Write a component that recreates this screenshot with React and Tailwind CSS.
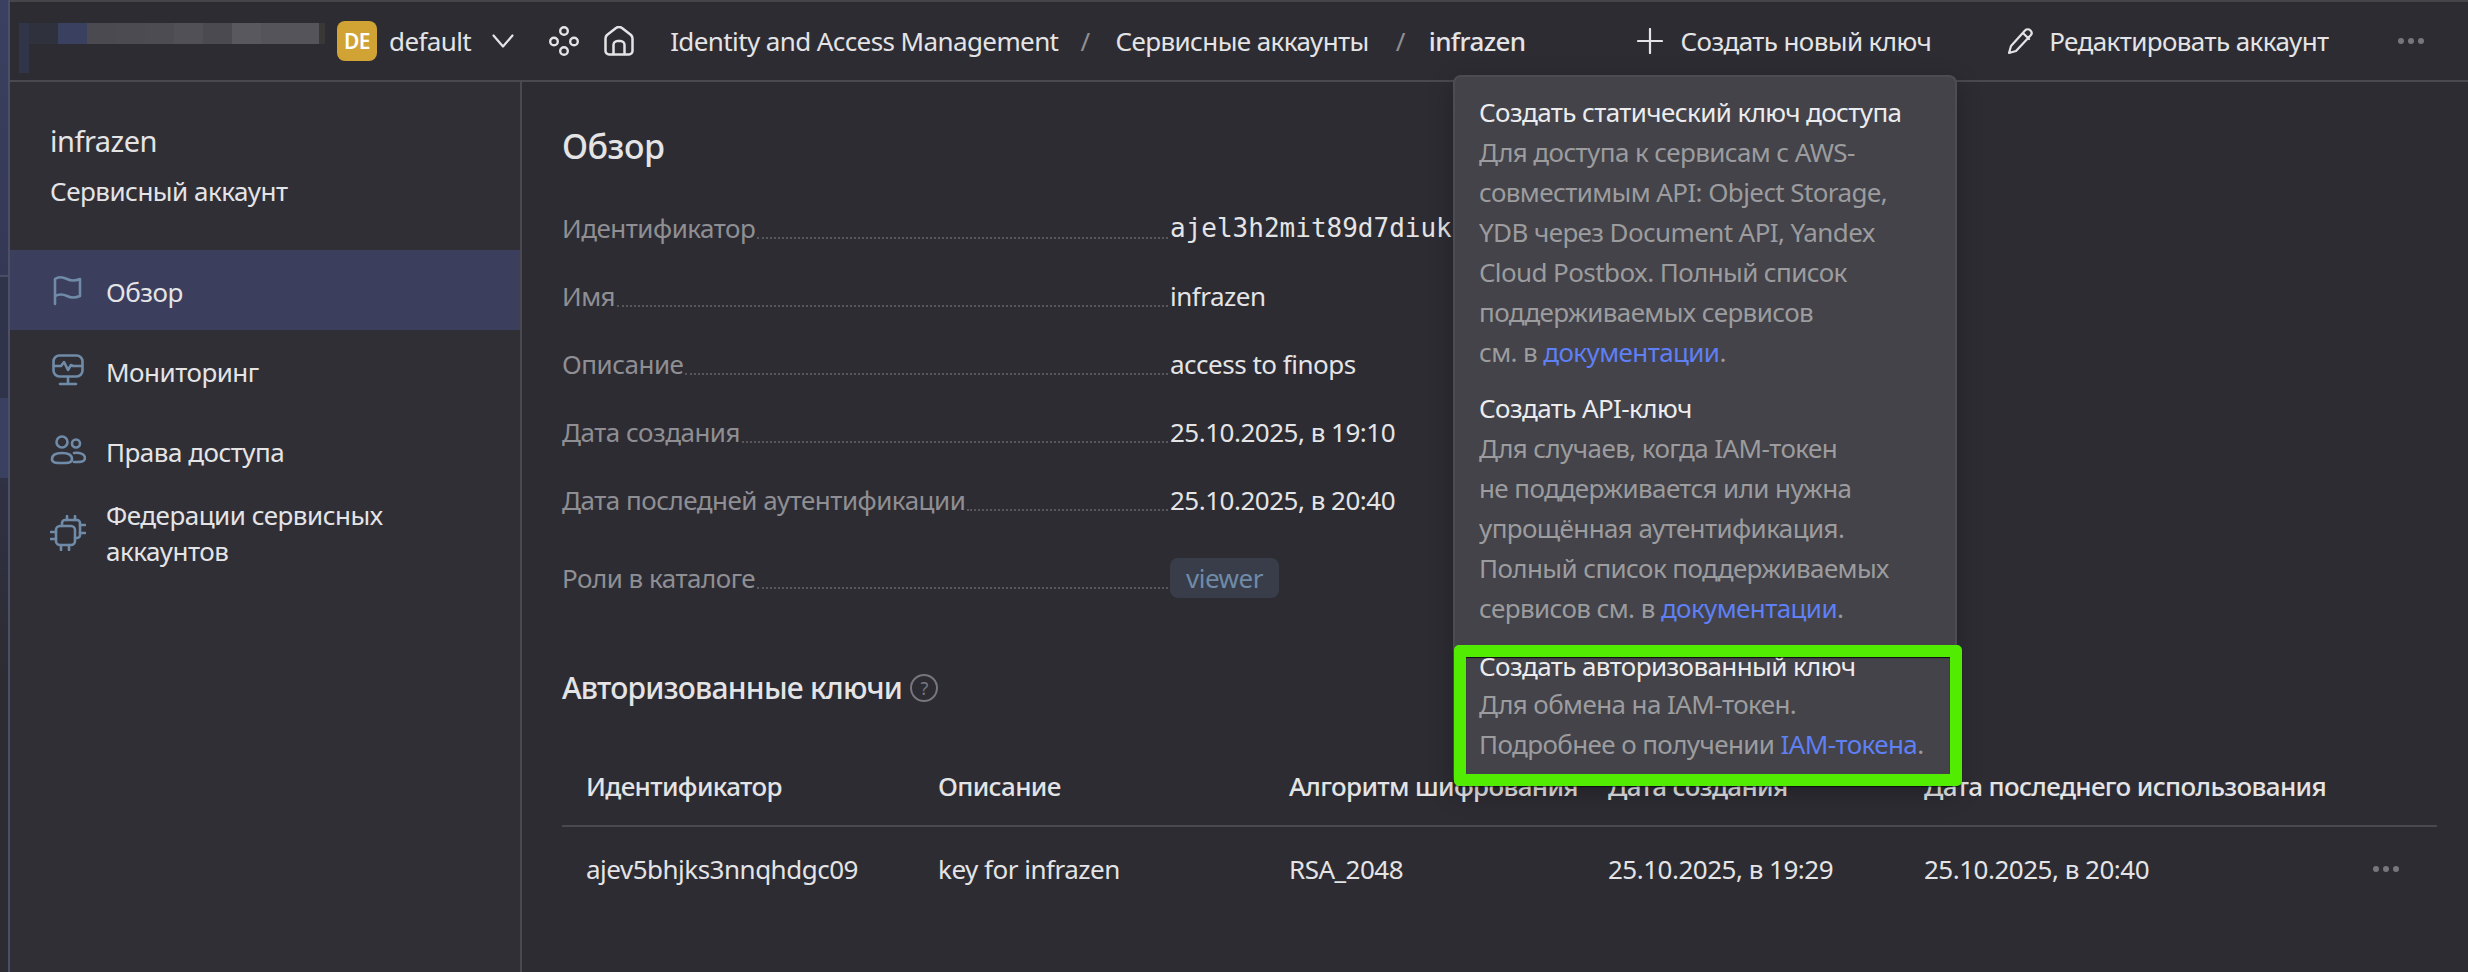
import React from "react";

const F = { fontFamily: '"Noto Sans", "Liberation Sans", sans-serif' };

function Flag() {
  return (
    <svg width="32" height="32" viewBox="0 0 32 32" fill="none" stroke="#6f8ba8" strokeWidth="2.6" strokeLinecap="round" strokeLinejoin="round">
      <path d="M3 30V5c4-3 8-2 12 0s8 2 13 0v17c-5 2-9 2-13 0s-8-2-12 0" />
    </svg>
  );
}
function Monitor() {
  return (
    <svg width="32" height="32" viewBox="0 0 32 32" fill="none" stroke="#6f8ba8" strokeWidth="2.6" strokeLinecap="round" strokeLinejoin="round">
      <rect x="1.5" y="1.5" width="29" height="21" rx="6" />
      <path d="M2 12h7l3-4 4 8 3-5 2 1h9M16 23v6M8 30h16" />
    </svg>
  );
}
function People() {
  return (
    <svg width="36" height="30" viewBox="0 0 36 30" fill="none" stroke="#6f8ba8" strokeWidth="2.6" strokeLinecap="round" strokeLinejoin="round">
      <circle cx="12" cy="7" r="5.5" />
      <circle cx="26" cy="8.5" r="4" />
      <path d="M2 24c0-4 4-6 10-6s10 2 10 6-4 4-10 4-10 0-10-4zM24 18c5-1 11 1 11 5s-4 4-11 4" />
    </svg>
  );
}
function Chips() {
  return (
    <svg width="36" height="36" viewBox="0 0 36 36" fill="none" stroke="#6f8ba8" strokeWidth="2.6" strokeLinecap="round" strokeLinejoin="round">
      <rect x="6" y="11" width="19" height="19" rx="4" />
      <path d="M12 11V8a3 3 0 0 1 3-3h12a3 3 0 0 1 3 3v12a3 3 0 0 1-3 3h-2" />
      <path d="M11 30v5M19 30v5M1 17h5M1 24h5M17 1v4M25 1v4M30 10h5M30 18h5" />
    </svg>
  );
}
function Dots({ color = "#77767c" }) {
  return (
    <svg width="28" height="8" viewBox="0 0 28 8" fill={color}>
      <circle cx="4" cy="4" r="3" />
      <circle cx="14" cy="4" r="3" />
      <circle cx="24" cy="4" r="3" />
    </svg>
  );
}

function Header() {
  return (
    <header className="h-[78px] flex items-center text-[26px] text-[#e4e4e6] shrink-0 pl-[9px] whitespace-nowrap tracking-[-0.6px]">
      <div className="w-[307px] h-[50px] self-start mt-[21px] flex flex-col shrink-0">
        <div className="h-[21px] flex">
          <div className="w-[10px] bg-[#30354a]" />
          <div className="w-[29px] bg-[#2f313d]" />
          <div className="w-[29px] bg-[#3a4060]" />
          <div className="w-[29px] bg-[#4a4a50]" />
          <div className="w-[29px] bg-[#4b4b51]" />
          <div className="w-[29px] bg-[#4c4c52]" />
          <div className="w-[29px] bg-[#505056]" />
          <div className="w-[29px] bg-[#4a4a50]" />
          <div className="w-[29px] bg-[#58585e]" />
          <div className="w-[58px] bg-[#54545a]" />
          <div className="w-[6px] bg-[#3a3836]" />
        </div>
        <div className="w-[10px] flex-1 bg-[#30354a]" />
      </div>
      <div className="ml-[11px] w-[40px] h-[40px] shrink-0 rounded-[8px] bg-[#d1a335] flex items-center justify-center text-white text-[21px] font-semibold">DE</div>
      <span className="ml-[12px]">default</span>
      <svg className="ml-[21px] shrink-0" width="22" height="14" viewBox="0 0 22 14" fill="none" stroke="#e4e4e6" strokeWidth="2.2" strokeLinecap="round" strokeLinejoin="round">
        <path d="M1.5 1.5 11 12.5l9.5-11" />
      </svg>
      <svg className="ml-[35px] shrink-0" width="30" height="30" viewBox="0 0 30 30" fill="none" stroke="#e4e4e6" strokeWidth="2.4">
        <circle cx="15" cy="5" r="3.8" />
        <circle cx="5" cy="15.5" r="3.8" />
        <circle cx="25" cy="15.5" r="3.8" />
        <circle cx="15" cy="25" r="3.8" />
      </svg>
      <svg className="ml-[25px] shrink-0" width="30" height="30" viewBox="0 0 30 30" fill="none" stroke="#e4e4e6" strokeWidth="2.5" strokeLinecap="round" strokeLinejoin="round">
        <path d="M1.5 25V12.5c0-1.500.5-2.500 1.500-3.500l9-7c2-1.200 4-1.200 6 0l9 7c1 1 1.500 2 1.500 3.500V25a3.500 3.500 0 0 1-3.500 3.500H5A3.500 3.500 0 0 1 1.500 25z" />
        <path d="M9.5 28v-9a4 4 0 0 1 4-4h3a4 4 0 0 1 4 4v9" />
      </svg>
      <span className="ml-[36px]">Identity and Access Management</span>
      <span className="ml-[22px] text-[#8f8f93]">/</span>
      <span className="ml-[26px]">Сервисные аккаунты</span>
      <span className="ml-[27px] text-[#8f8f93]">/</span>
      <span className="ml-[24px] font-medium">infrazen</span>
      <svg className="ml-[111px] shrink-0" width="26" height="26" viewBox="0 0 26 26" fill="none" stroke="#e4e4e6" strokeWidth="2.2" strokeLinecap="round">
        <path d="M13 1v24M1 13h24" />
      </svg>
      <span className="ml-[18px]">Создать новый ключ</span>
      <svg className="ml-[76px] shrink-0" width="28" height="28" viewBox="0 0 28 28" fill="none" stroke="#e4e4e6" strokeWidth="2.2" strokeLinecap="round" strokeLinejoin="round">
        <path d="M18 3.5c1.500-1.500 4-1.500 5.500 0s1.500 3.500 0 5L9 24l-7 2 2-7zM16 6l6 6" />
      </svg>
      <span className="ml-[14px]">Редактировать аккаунт</span>
      <span className="ml-[68px] flex"><Dots /></span>
    </header>
  );
}

function NavItem({ icon, active, children, tall }) {
  return (
    <div className={`flex items-center gap-[20px] pl-[40px] ${tall ? "leading-[36px] mt-[7px]" : "h-[80px]"} ${active ? "bg-[#3b3e5c]" : ""}`}>
      <div className="w-[36px] flex justify-center items-center shrink-0">{icon}</div>
      <div className={tall ? "" : "pt-[3px]"}>{children}</div>
    </div>
  );
}

function Row({ label, value, mono, tag, first }) {
  return (
    <div className={`flex items-end w-[916px] ${tag ? "h-[36px] mt-[42px]" : "h-[36px]"} ${first || tag ? "" : "mt-[32px]"}`}>
      <span className="text-[#8f8f93]">{label}</span>
      <span className="flex-1 mx-[2px] mb-[7px] border-b-2 border-dotted border-[#57575c]" />
      <span className="w-[308px] shrink-0">
        {tag ? (
          <span className="inline-block h-[40px] leading-[40px] px-[16px] rounded-[8px] bg-[#383d49] text-[#6f8ba8] -mb-[2px]">{value}</span>
        ) : (
          <span className={mono ? "whitespace-nowrap tracking-normal" : ""} style={mono ? { fontFamily: '"DejaVu Sans Mono", monospace' } : undefined}>{value}</span>
        )}
      </span>
    </div>
  );
}

function Popup() {
  const T = ({ children }) => <div className="text-[#ececee]">{children}</div>;
  const D = ({ children }) => <div className="text-[#9c9c9f]">{children}</div>;
  const A = ({ children }) => <span className="text-[#5f7ff5]">{children}</span>;
  return (
    <div className="absolute left-[1453px] top-[75px] w-[504px] h-[710px] bg-[#434349] border-2 border-[#4c4c52] rounded-[8px] pl-[24px] pt-[15px] text-[26px] leading-[40px] tracking-[-0.6px] shadow-[0_8px_24px_rgba(0,0,0,0.25)]">
      <T>Создать статический ключ доступа</T>
      <D>Для доступа к сервисам с AWS-<br />совместимым API: Object Storage,<br />YDB через Document API, Yandex<br />Cloud Postbox. Полный список<br />поддерживаемых сервисов<br />см. в <A>документации</A>.</D>
      <div className="mt-[16px]"><T>Создать API-ключ</T></div>
      <D>Для случаев, когда IAM-токен<br />не поддерживается или нужна<br />упрощённая аутентификация.<br />Полный список поддерживаемых<br />сервисов см. в <A>документации</A>.</D>
      <div className="mt-[20px] leading-[36px]"><T>Создать авторизованный ключ</T></div>
      <D>Для обмена на IAM-токен.<br />Подробнее о получении <A>IAM-токена</A>.</D>
    </div>
  );
}

export default function App() {
  return (
    <div className="relative w-[2468px] h-[972px] overflow-hidden bg-[#2d2c33] text-[26px] leading-[36px] tracking-[-0.5px] text-[#e4e4e6] flex" style={F}>
      <div className="w-[10px] shrink-0 flex flex-col border-r-2 border-[#4d4f66]">
        <div className="h-[277px] bg-gradient-to-b from-[#3a4060] to-[#343855] border-b-2 border-[#4a4d68]" />
        <div className="h-[121px] bg-[#30344b]" />
        <div className="h-[80px] bg-[#3a4060]" />
        <div className="flex-1 bg-gradient-to-b from-[#2f3144] to-[#2d2c33] to-[40%]" />
      </div>
      <div className="flex-1 flex flex-col min-w-0">
        <div className="h-[2px] bg-[#46464a] shrink-0" />
        <Header />
        <div className="h-[2px] bg-[#49494f] shrink-0" />
        <div className="flex flex-1 min-h-0">
          <aside className="w-[510px] shrink-0 bg-[#302f36] border-r-2 border-[#49494f] box-content">
            <div className="h-[168px] pl-[40px] pt-[41px]">
              <div className="text-[29px]">infrazen</div>
              <div className="mt-[14px]">Сервисный аккаунт</div>
            </div>
            <NavItem active icon={<Flag />}>Обзор</NavItem>
            <NavItem icon={<Monitor />}>Мониторинг</NavItem>
            <NavItem icon={<People />}>Права доступа</NavItem>
            <NavItem tall icon={<Chips />}>Федерации сервисных<br />аккаунтов</NavItem>
          </aside>
          <main className="flex-1 min-w-0 pl-[40px] pr-[31px] pt-[42px]">
            <h1 className="text-[34px] leading-[44px] font-medium">Обзор</h1>
            <div className="mt-[42px]">
              <Row first label="Идентификатор" value="ajel3h2mit89d7diuk" mono />
              <Row label="Имя" value="infrazen" />
              <Row label="Описание" value="access to finops" />
              <Row label="Дата создания" value="25.10.2025, в 19:10" />
              <Row label="Дата последней аутентификации" value="25.10.2025, в 20:40" />
              <Row tag label="Роли в каталоге" value="viewer" />
            </div>
            <div className="mt-[72px] flex items-center gap-[8px]">
              <h2 className="text-[30px] leading-[40px] font-medium tracking-[-0.75px]">Авторизованные ключи</h2>
              <div className="w-[28px] h-[28px] rounded-full border-2 border-[#77767c] text-[#77767c] text-[18px] leading-[24px] text-center">?</div>
            </div>
            <div className="mt-[60px]">
              <div className="h-[57px] flex items-start pl-[24px] font-medium border-b-2 border-[#49494f] box-content leading-[36px] tracking-[-0.65px]">
                <div className="w-[352px]">Идентификатор</div>
                <div className="w-[351px]">Описание</div>
                <div className="w-[319px] whitespace-nowrap">Алгоритм шифрования</div>
                <div className="w-[316px]">Дата создания</div>
                <div>Дата последнего использования</div>
              </div>
              <div className="flex items-center pl-[24px] h-[84px]">
                <div className="w-[352px]">ajev5bhjks3nnqhdgc09</div>
                <div className="w-[351px]">key for infrazen</div>
                <div className="w-[319px]">RSA_2048</div>
                <div className="w-[316px]">25.10.2025, в 19:29</div>
                <div>25.10.2025, в 20:40</div>
                <div className="ml-auto mr-[37px] flex"><Dots /></div>
              </div>
            </div>
          </main>
        </div>
      </div>
      <Popup />
      <div className="absolute left-[1454px] top-[645px] w-[508px] h-[141px] border-[12px] border-[#52ec03] rounded-[5px] shadow-[0_1px_1px_rgba(0,0,0,0.6),inset_0_1px_1px_rgba(0,0,0,0.8)]" />
    </div>
  );
}
